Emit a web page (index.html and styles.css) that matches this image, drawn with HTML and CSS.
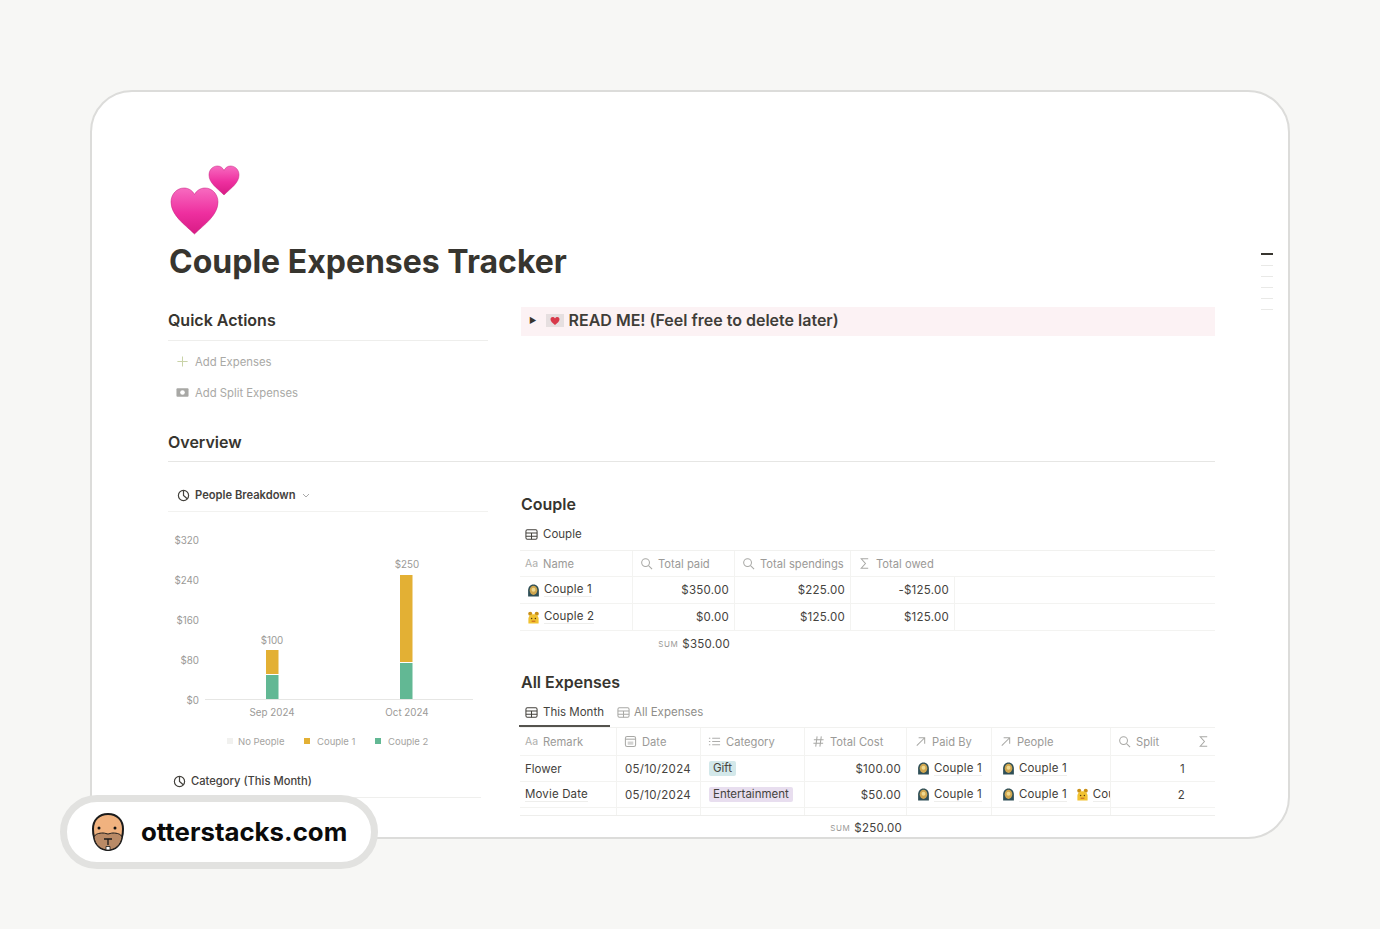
FILE: index.html
```html
<!DOCTYPE html>
<html lang="en">
<head>
<meta charset="utf-8">
<title>Couple Expenses Tracker</title>
<link rel="stylesheet" href="styles.css">
</head>
<body>
<svg class="defs" width="0" height="0" aria-hidden="true">
  <defs>
    <linearGradient id="heartGrad" x1="0" y1="0" x2="0" y2="1">
      <stop offset="0" stop-color="#f76bc0"/>
      <stop offset="0.55" stop-color="#ee2f9f"/>
      <stop offset="1" stop-color="#d81b85"/>
    </linearGradient>
    <symbol id="i-table" viewBox="0 0 14 14"><rect x="1" y="2" width="12" height="10" rx="1.5" fill="none" stroke="currentColor" stroke-width="1.1"/><path d="M1 5.5h12M1 8.8h12M7 5.5V12" fill="none" stroke="currentColor" stroke-width="1.1"/></symbol>
    <symbol id="i-search" viewBox="0 0 14 14"><circle cx="6" cy="6" r="4.2" fill="none" stroke="currentColor" stroke-width="1.1"/><path d="M9.2 9.2L13 13" fill="none" stroke="currentColor" stroke-width="1.1"/></symbol>
    <symbol id="i-sigma" viewBox="0 0 14 14"><path d="M11 2H3.5L8 7l-4.500 5H11" fill="none" stroke="currentColor" stroke-width="1.1"/></symbol>
    <symbol id="i-cal" viewBox="0 0 14 14"><rect x="1.500" y="1.500" width="11" height="11" rx="2" fill="none" stroke="currentColor" stroke-width="1.1"/><path d="M1.500 4.500h11" stroke="currentColor" stroke-width="1.1"/><rect x="4" y="7" width="6" height="3.500" fill="currentColor" opacity=".5"/></symbol>
    <symbol id="i-list" viewBox="0 0 14 14"><path d="M4.500 3.500H13M4.500 7H13M4.500 10.500H13M1 3.500h1.500M1 7h1.500M1 10.500h1.500" fill="none" stroke="currentColor" stroke-width="1"/></symbol>
    <symbol id="i-hash" viewBox="0 0 14 14"><path d="M5.500 1.500L4 12.500M10 1.500L8.500 12.500M2 5h10.500M1.500 9H12" fill="none" stroke="currentColor" stroke-width="1.1"/></symbol>
    <symbol id="i-arrow" viewBox="0 0 14 14"><path d="M3 11.500L11 3.500M5 3h6.500v6.500" fill="none" stroke="currentColor" stroke-width="1.1"/></symbol>
    <symbol id="i-pie" viewBox="0 0 14 14"><circle cx="7" cy="7" r="5.500" fill="none" stroke="currentColor" stroke-width="1.300"/><path d="M7 1.500V7l4 3.500" fill="none" stroke="currentColor" stroke-width="1.300"/></symbol>
    <symbol id="i-plus" viewBox="0 0 14 14"><path d="M7 1.500v11M1.500 7h11" fill="none" stroke="currentColor" stroke-width="1.100"/></symbol>
    <symbol id="i-money" viewBox="0 0 14 14"><rect x="0.500" y="2.500" width="13" height="9" rx="1" fill="currentColor"/><circle cx="7" cy="7" r="2.500" fill="#fff"/></symbol>
    <symbol id="i-chev" viewBox="0 0 10 10"><path d="M2 4l3 3 3-3" fill="none" stroke="currentColor" stroke-width="1"/></symbol>
    <symbol id="i-c1" viewBox="0 0 14 14"><path d="M7 .5C3.500 .5 1.200 3.300 1.200 7v6.500h11.600V7C12.800 3.300 10.500 .5 7 .5z" fill="#2f4f57"/><ellipse cx="7" cy="6.800" rx="4.100" ry="5" fill="#cfa64f"/><circle cx="7" cy="6.200" r="2.100" fill="#efd98f"/></symbol>
    <symbol id="i-c2" viewBox="0 0 14 14"><circle cx="3.500" cy="3" r="2.200" fill="#c98f16"/><circle cx="10.500" cy="3" r="2.200" fill="#c98f16"/><path d="M1.500 13.500V8.500C1.500 5.500 4 3.500 7 3.500s5.500 2 5.500 5v5z" fill="#f1c231"/><circle cx="5" cy="8" r=".8" fill="#5a3d0c"/><circle cx="9" cy="8" r=".8" fill="#5a3d0c"/><path d="M5 11h4" stroke="#c0561c" stroke-width="1"/></symbol>
  </defs>
</svg>

<main class="stage">
  <section class="card">
    <svg class="hearts" viewBox="0 0 70 70" width="70" height="70" role="img" aria-label="Two hearts">
      <path d="M24.500 69C14 59 1 50 1 37 1 29 7 23 14 23c4.500 0 8.500 2.500 10.500 6.500C26.500 25.500 30.500 23 35 23c7 0 13 6 13 14 0 13-13 22-23.500 32z" fill="url(#heartGrad)" stroke="#c4237f" stroke-width=".5"/>
      <path d="M54 30C47 23 39 18 39 10 39 4.500 43 1 47.500 1c3 0 5.500 2 6.500 4.500C55 3 57.500 1 60.500 1 65 1 69 4.500 69 10c0 8-8 13-15 20z" fill="url(#heartGrad)" stroke="#c4237f" stroke-width=".5"/>
    </svg>
    <h1 class="title">Couple Expenses Tracker</h1>

    <div class="cols top-cols">
      <div>
        <h2 class="heading ruled">Quick Actions</h2>
        <div class="action first"><svg class="ico plus"><use href="#i-plus"/></svg>Add Expenses</div>
        <div class="action"><svg class="ico"><use href="#i-money"/></svg>Add Split Expenses</div>
      </div>
      <div class="callout">
        <span class="tri">▶</span>
        <svg class="mail" viewBox="0 0 18 13" width="18" height="13"><rect width="18" height="13" fill="#e6dfe0"/><path d="M9 11C6.500 9 4.500 7.500 4.500 5.300 4.500 3.800 5.600 3 6.700 3 7.800 3 8.500 3.600 9 4.400 9.500 3.600 10.200 3 11.300 3c1.100 0 2.200.8 2.200 2.300C13.500 7.500 11.500 9 9 11z" fill="#d8394a"/></svg>
        READ ME! (Feel free to delete later)
      </div>
    </div>

    <h2 class="heading overview">Overview</h2>

    <div class="cols">
      <div>
        <div class="view-head first-view"><svg class="ico dark"><use href="#i-pie"/></svg>People Breakdown<svg class="chev"><use href="#i-chev"/></svg></div>
        <svg class="chart" width="320" height="255" viewBox="168 512 320 255" role="img" aria-label="People Breakdown chart">
          <g class="axis-y">
            <text x="199" y="543.500">$320</text>
            <text x="199" y="583.500">$240</text>
            <text x="199" y="623.500">$160</text>
            <text x="199" y="663.500">$80</text>
            <text x="199" y="703.500">$0</text>
          </g>
          <line x1="205" y1="699.500" x2="473" y2="699.500" stroke="#e6e6e4"/>
          <rect x="266" y="650" width="12.500" height="24" fill="#e3b034"/>
          <rect x="266" y="675" width="12.500" height="24" fill="#62b894"/>
          <rect x="400" y="575" width="12.500" height="87" fill="#e3b034"/>
          <rect x="400" y="663" width="12.500" height="36" fill="#62b894"/>
          <g class="axis-x">
            <text x="272" y="643.500">$100</text>
            <text x="407" y="568">$250</text>
            <text x="272" y="715.500">Sep 2024</text>
            <text x="407" y="715.500">Oct 2024</text>
          </g>
          <g class="legend">
            <rect x="227" y="738" width="6" height="6" fill="#f1f1ef"/><text x="238" y="745">No People</text>
            <rect x="304" y="738" width="6" height="6" fill="#e3b034"/><text x="317" y="745">Couple 1</text>
            <rect x="375" y="738" width="6" height="6" fill="#62b894"/><text x="388" y="745">Couple 2</text>
          </g>
        </svg>
        <div class="view-head second-view"><svg class="ico dark"><use href="#i-pie"/></svg>Category (This Month)</div>
      </div>

      <div>
        <h2 class="heading couple-h">Couple</h2>
        <div class="tab solo"><svg class="ico dark"><use href="#i-table"/></svg>Couple</div>
        <div class="table couple-table">
          <div class="row head">
            <div class="cell"><span class="aa">Aa</span>Name</div>
            <div class="cell"><svg class="ico"><use href="#i-search"/></svg>Total paid</div>
            <div class="cell"><svg class="ico"><use href="#i-search"/></svg>Total spendings</div>
            <div class="cell no-rule"><svg class="ico"><use href="#i-sigma"/></svg>Total owed</div>
            <div class="cell no-rule"></div>
          </div>
          <div class="row">
            <div class="cell title-cell"><svg class="ico"><use href="#i-c1"/></svg><span class="link">Couple 1</span></div>
            <div class="cell num">$350.00</div>
            <div class="cell num">$225.00</div>
            <div class="cell num">-$125.00</div>
            <div class="cell no-rule"></div>
          </div>
          <div class="row">
            <div class="cell title-cell"><svg class="ico"><use href="#i-c2"/></svg><span class="link">Couple 2</span></div>
            <div class="cell num">$0.00</div>
            <div class="cell num">$125.00</div>
            <div class="cell num">$125.00</div>
            <div class="cell no-rule"></div>
          </div>
          <div class="row sum-row">
            <div class="cell no-rule"></div>
            <div class="cell num no-rule"><small>SUM</small>$350.00</div>
          </div>
        </div>

        <h2 class="heading expenses-h">All Expenses</h2>
        <div class="tabs">
          <div class="tab active"><svg class="ico dark"><use href="#i-table"/></svg>This Month</div>
          <div class="tab muted"><svg class="ico"><use href="#i-table"/></svg>All Expenses</div>
        </div>
        <div class="table exp-table">
          <div class="row head">
            <div class="cell"><span class="aa">Aa</span>Remark</div>
            <div class="cell"><svg class="ico"><use href="#i-cal"/></svg>Date</div>
            <div class="cell"><svg class="ico"><use href="#i-list"/></svg>Category</div>
            <div class="cell"><svg class="ico"><use href="#i-hash"/></svg>Total Cost</div>
            <div class="cell"><svg class="ico"><use href="#i-arrow"/></svg>Paid By</div>
            <div class="cell"><svg class="ico"><use href="#i-arrow"/></svg>People</div>
            <div class="cell no-rule"><svg class="ico"><use href="#i-search"/></svg>Split</div>
            <div class="cell no-rule"><svg class="ico"><use href="#i-sigma"/></svg></div>
          </div>
          <div class="row">
            <div class="cell title-cell">Flower</div>
            <div class="cell date">05/10/2024</div>
            <div class="cell"><span class="tag gift">Gift</span></div>
            <div class="cell num">$100.00</div>
            <div class="cell"><svg class="ico"><use href="#i-c1"/></svg><span class="link">Couple 1</span></div>
            <div class="cell"><svg class="ico"><use href="#i-c1"/></svg><span class="link">Couple 1</span></div>
            <div class="cell num no-rule">1</div>
            <div class="cell no-rule"></div>
          </div>
          <div class="row">
            <div class="cell title-cell"><span class="link">Movie Date</span></div>
            <div class="cell date">05/10/2024</div>
            <div class="cell"><span class="tag ent">Entertainment</span></div>
            <div class="cell num">$50.00</div>
            <div class="cell"><svg class="ico"><use href="#i-c1"/></svg><span class="link">Couple 1</span></div>
            <div class="cell"><svg class="ico"><use href="#i-c1"/></svg><span class="link">Couple 1</span><svg class="ico second"><use href="#i-c2"/></svg><span class="link">Couple 2</span></div>
            <div class="cell num no-rule">2</div>
            <div class="cell no-rule"></div>
          </div>
          <div class="row stub">
            <div class="cell"></div><div class="cell"></div><div class="cell"></div><div class="cell"></div><div class="cell"></div><div class="cell"></div><div class="cell no-rule"></div><div class="cell no-rule"></div>
          </div>
          <div class="row sum-row">
            <div class="cell no-rule"></div><div class="cell no-rule"></div><div class="cell no-rule"></div>
            <div class="cell num no-rule"><small>SUM</small>$250.00</div>
          </div>
        </div>
      </div>
    </div>

    <div class="toc"><i class="on"></i><i></i><i></i><i></i><i></i><i></i></div>
  </section>

  <div class="pill">
    <svg class="otter" viewBox="0 0 34 38" width="34" height="38" role="img" aria-label="Otter logo">
      <path d="M17 1C8 1 2 7 2 16c0 2 0 5 1 8 1 8 7 13 14 13s13-5 14-13c1-3 1-6 1-8C32 7 26 1 17 1z" fill="#f0b27f" stroke="#1b1b1b" stroke-width="2"/>
      <path d="M3 24c1 8 7 13 14 13s13-5 14-13c-1-3-5-4-9-4-2 0-4 1-5 1s-3-1-5-1c-4 0-8 1-9 4z" fill="#b98a66" stroke="#1b1b1b" stroke-width="1"/>
      <circle cx="8" cy="15" r="1.500" fill="#111"/><circle cx="24" cy="15" r="1.500" fill="#111"/>
      <path d="M13 26h8M17 26v6" stroke="#1b1b1b" stroke-width="1.300" fill="none"/>
      <path d="M15 33.500h4v3.500h-4z" fill="#fff" stroke="#1b1b1b" stroke-width=".8"/>
    </svg>
    <span class="brand">otterstacks.com</span>
  </div>
</main>
</body>
</html>
```

FILE: styles.css
```css
* { box-sizing: border-box; }

html, body {
  margin: 0;
  height: 929px;
  overflow: hidden;
}

body {
  background: #f7f7f5;
  font-family: Inter, "Liberation Sans", sans-serif;
  color: #37352f;
}

.defs { position: absolute; }

.stage {
  position: relative;
  padding: 90px 90px 0;
}

.card {
  position: relative;
  width: 1200px;
  height: 749px;
  padding: 73px 73px 0 76px;
  background: #fff;
  border: 2px solid #dcdcda;
  border-radius: 42px;
  overflow: hidden;
}

.hearts { display: block; margin-left: 2px; }

.title {
  margin: 7px 0 0 1px;
  font-size: 32px;
  line-height: 40px;
  font-weight: 700;
  color: #37352f;
}

.cols {
  display: grid;
  grid-template-columns: 320px 695px;
  column-gap: 32px;
}

.top-cols { margin-top: 25px; }

.heading {
  margin: 0;
  font-size: 16px;
  line-height: 26px;
  font-weight: 600;
  color: #37352f;
}

.ruled {
  padding-bottom: 7px;
  border-bottom: 1px solid #eeeeec;
}

.action {
  display: flex;
  align-items: center;
  gap: 6px;
  height: 31px;
  padding-left: 8px;
  font-size: 11.3px;
  color: #a9a9a6;
}

.action.first { margin-top: 5px; }

.ico {
  flex: none;
  width: 13px;
  height: 13px;
  color: #a8a8a5;
}

.ico.dark { color: #44423d; }
.ico.plus { color: #c9d3a8; }

.callout {
  display: flex;
  align-items: center;
  height: 29px;
  padding: 0 0 3px 8px;
  margin-left: 1px;
  background: #fcf2f4;
  font-size: 16px;
  font-weight: 600;
  color: #3f3d38;
}

.tri { font-size: 8px; margin-right: 9px; color: #37352f; }
.mail { margin-right: 5px; }

.overview {
  margin-top: 21px;
  padding-bottom: 6px;
  border-bottom: 1px solid #e6e6e4;
}

.view-head {
  display: flex;
  align-items: center;
  gap: 5px;
  height: 26px;
  font-size: 11.2px;
  font-weight: 500;
  color: #44423d;
}

.first-view {
  box-sizing: content-box;
  margin-top: 20px;
  padding: 0 0 3px 9px;
  border-bottom: 1px solid #f2f2f0;
  font-weight: 600;
}

.second-view {
  box-sizing: content-box;
  margin: 1px 7px 0 0;
  padding: 0 0 3px 5px;
  border-bottom: 1px solid #efefed;
}

.chev { width: 10px; height: 10px; color: #aaa; }

.chart { display: block; }

.chart text {
  font-family: Inter, "Liberation Sans", sans-serif;
  font-size: 9.8px;
  fill: #9b9a97;
}

.axis-y text { text-anchor: end; }
.axis-x text { text-anchor: middle; }
.legend text { font-size: 9.5px; fill: #a5a4a1; }

.couple-h { margin: 29px 0 0 1px; }
.expenses-h { margin: 12px 0 0 1px; }

.tab {
  display: flex;
  align-items: center;
  gap: 5px;
  height: 24px;
  padding-left: 5px;
  font-size: 11.5px;
  color: #44423d;
}

.tab.solo { margin: 5px 0 4px; }
.tab.muted { color: #8f8e8a; gap: 4px; }

.tabs {
  display: flex;
  align-items: flex-start;
  gap: 2px;
  margin-top: 5px;
  height: 27px;
}

.tab.active {
  box-sizing: content-box;
  padding: 0 6px 1px 6px;
  border-bottom: 2px solid #55534e;
  margin-left: -1px;
}

.table { font-size: 11.5px; }

.row {
  display: grid;
  height: 27px;
  border-bottom: 1px solid #f3f3f1;
}

.row.head { height: 26px; }

.couple-table { border-top: 1px solid #f1f1ef; }
.couple-table .row { grid-template-columns: 113px 102px 116px 104px 260px; }

.exp-table { border-top: 1px solid #f1f1ef; }
.exp-table .row { grid-template-columns: 97px 84px 104px 102px 85px 119px 79px 25px; height: 26px; }
.exp-table .row.head { height: 28px; }

.cell {
  display: flex;
  align-items: center;
  gap: 4px;
  min-width: 0;
  padding: 0 5px 0 8px;
  white-space: nowrap;
  overflow: hidden;
  border-right: 1px solid #f3f3f1;
  color: #45433e;
}

.cell > .ico { margin-left: 2px; }
.cell > .ico.second { margin-left: 5px; }

.title-cell { padding-left: 5px; }

.no-rule { border-right: 0; }

.head .cell {
  gap: 5px;
  padding-left: 7px;
  font-size: 11.2px;
  color: #9b9a97;
}

.head .cell:first-child { padding-left: 5px; }
.head .cell > .ico { margin-left: 0; }

.num {
  justify-content: flex-end;
  letter-spacing: 0.25px;
}

.date { letter-spacing: 0.3px; }

.aa {
  width: 13px;
  font-size: 10.5px;
  color: #aeaeab;
}

.link {
  border-bottom: 1px solid #eeeeec;
  line-height: 13px;
  letter-spacing: 0.15px;
  color: #3f3d38;
}

.tag {
  padding: 0 4px;
  line-height: 15px;
  border-radius: 2px;
}

.gift { background: #d3e8ea; }
.ent { background: #e8deef; }

.exp-table .row.stub { height: 8px; border-bottom-color: #eeeeec; }

.couple-table .sum-row { height: 26px; border-bottom: 0; }
.exp-table .row.sum-row { height: 24px; border-bottom: 0; }

.sum-row small {
  font-size: 8px;
  letter-spacing: 0.6px;
  color: #9b9a97;
}

.toc {
  position: absolute;
  top: 161px;
  left: 1169px;
  display: flex;
  flex-direction: column;
  gap: 10px;
}

.toc i {
  display: block;
  width: 12px;
  height: 1px;
  background: #e9e9e7;
}

.toc i.on { height: 2px; background: #37352f; }

.pill {
  position: absolute;
  left: 60px;
  top: 795px;
  display: flex;
  align-items: center;
  gap: 16px;
  width: 318px;
  height: 74px;
  padding-left: 24px;
  background: #fff;
  border: 7px solid #e2e2e0;
  border-radius: 37px;
  font-size: 25.8px;
  font-weight: 700;
  color: #0b0b0b;
}

.brand { margin-top: -2px; }
```
